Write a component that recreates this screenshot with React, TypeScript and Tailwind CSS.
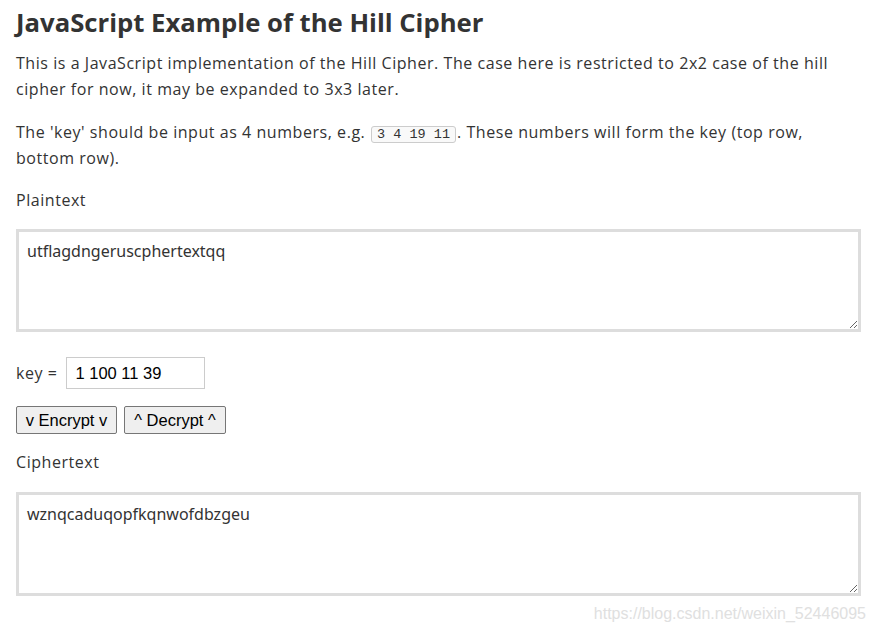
export default function App() {
  return (
    <div className="relative w-[875px] h-[633px] bg-white px-4 text-[#333]" style={{ fontFamily: '"Open Sans", sans-serif' }}>
      <h1 className="pt-[6px] text-[25.7px] font-bold leading-[34px] text-[#333]">JavaScript Example of the Hill Cipher</h1>
      <p className="mt-[10px] text-[16px] leading-[26px] tracking-[0.55px]">
        This is a JavaScript implementation of the Hill Cipher. The case here is restricted to 2x2 case of the hill cipher for now, it may be expanded to 3x3 later.
      </p>
      <p className="mt-[17px] text-[16px] leading-[26px] tracking-[0.55px]">
        The 'key' should be input as 4 numbers, e.g.{" "}
        <code className="mx-[1px] rounded-[3px] border border-[#ccc] bg-[#f9f9f9] px-[5px] py-0 text-[13.5px] leading-[16px] tracking-normal" style={{ fontFamily: '"Liberation Mono", monospace' }}>3 4 19 11</code>
        . These numbers will form the key (top row, bottom row).
      </p>
      <p className="mt-[16px] text-[16px] leading-[26px] tracking-[0.55px]">Plaintext</p>
      <textarea
        className="mt-[16px] block h-[103px] w-[845px] border-[3px] border-[#ddd] px-[8px] py-[7px] text-[16px] text-[#333] outline-none"
        style={{ fontFamily: '"Noto Sans", sans-serif', resize: 'vertical' }}
        defaultValue="utflagdngeruscphertextqq"
      />
      <div className="mt-[25px] flex items-center text-[16px] tracking-[0.55px]">
        <span>key =</span>
        <input
          className="ml-[9px] h-[32px] w-[139px] border border-[#ccc] px-[8px] text-[16.5px] tracking-normal text-black outline-none"
          style={{ fontFamily: '"Liberation Sans", sans-serif' }}
          defaultValue="1 100 11 39"
        />
      </div>
      <div className="mt-[17px] flex gap-[7px]" style={{ fontFamily: '"Liberation Sans", sans-serif' }}>
        <button className="h-[28px] w-[101px] rounded-[2px] border border-[#767676] bg-[#efefef] text-[16.5px] text-black">v Encrypt v</button>
        <button className="h-[28px] w-[102px] rounded-[2px] border border-[#767676] bg-[#efefef] text-[16.5px] text-black">^ Decrypt ^</button>
      </div>
      <p className="mt-[15px] text-[16px] leading-[26px] tracking-[0.55px]">Ciphertext</p>
      <textarea
        className="mt-[17px] block h-[104px] w-[845px] border-[3px] border-[#ddd] px-[8px] py-[7px] text-[16px] text-[#333] outline-none"
        style={{ fontFamily: '"Noto Sans", sans-serif', resize: 'vertical' }}
        defaultValue="wznqcaduqopfkqnwofdbzgeu"
      />
      <div className="absolute right-[9px] top-[602px] text-[16px] text-[#e0e0e0]" style={{ fontFamily: '"Liberation Sans", sans-serif' }}>
        https://blog.csdn.net/weixin_52446095
      </div>
    </div>
  );
}
